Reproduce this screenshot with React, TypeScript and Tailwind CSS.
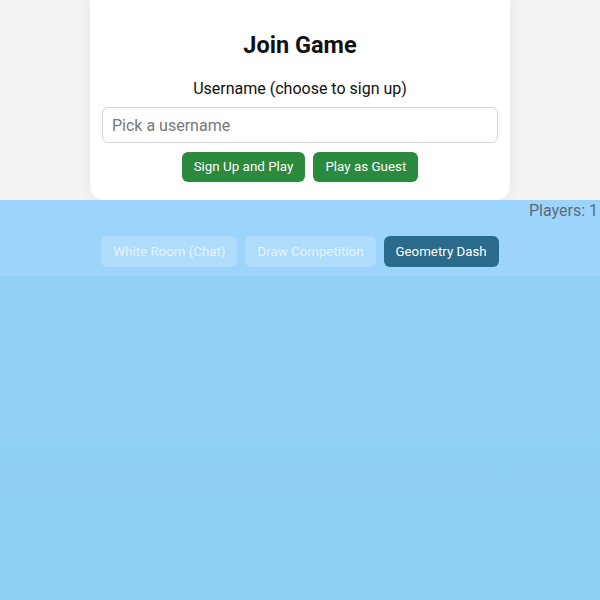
import React from 'react'

const tabs = [
    { label: 'White Room (Chat)', active: false },
    { label: 'Draw Competition', active: false },
    { label: 'Geometry Dash', active: true },
]

export default function App() {
    return (
        <div className="w-[600px] h-[600px] flex flex-col overflow-hidden font-['Roboto',sans-serif]">
            {/* Login overlay area */}
            <div className="h-[200px] bg-[#f4f3f1] flex justify-center">
                <div className="w-[420px] h-[200px] bg-white rounded-b-[14px] shadow-[0_0_16px_rgba(0,0,0,0.06)] flex flex-col items-center pt-[30px] px-3">
                    <h2 className="text-[23.5px] leading-[30px] font-bold text-[#111]">Join Game</h2>
                    <label className="mt-[19px] text-[16px] leading-[20px] text-[#111]">Username (choose to sign up)</label>
                    <input
                        className="mt-[8px] w-[396px] h-[36px] border border-[#d4d4d4] rounded-[6px] px-[9px] text-[16px] text-[#333] placeholder:text-[#777] outline-none"
                        placeholder="Pick a username"
                    />
                    <div className="mt-[9px] flex gap-2">
                        <button className="h-[30px] px-[12px] rounded-[6px] bg-[#2b8a3e] text-white text-[13.4px]">Sign Up and Play</button>
                        <button className="h-[30px] px-[12px] rounded-[6px] bg-[#2b8a3e] text-white text-[13.4px]">Play as Guest</button>
                    </div>
                </div>
            </div>

            {/* Game area */}
            <div className="flex-1 bg-gradient-to-b from-[#95d1f8] to-[#8ecef2] flex flex-col">
                <div className="h-[76px] bg-[#9fd5fd]/80 flex flex-col">
                    <div className="flex justify-end pr-[2px] pt-[1px] text-[16px] leading-[20px] text-[#5b6c7a]">Players: 1</div>
                    <div className="mt-[15px] flex justify-center gap-2">
                        {tabs.map((t) => (
                            <button
                                key={t.label}
                                className={
                                    t.active
                                        ? 'h-[31px] px-3 rounded-[6px] bg-[#2a6a8b] text-white text-[13.3px]'
                                        : 'h-[31px] px-3 rounded-[6px] bg-white/20 text-white/65 text-[13.3px]'
                                }
                            >
                                {t.label}
                            </button>
                        ))}
                    </div>
                </div>
            </div>
        </div>
    )
}
